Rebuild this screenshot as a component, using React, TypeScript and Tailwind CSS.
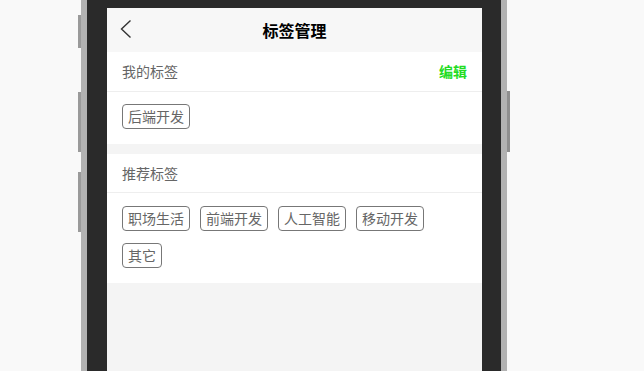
import React from "react";

const font = { fontFamily: '"Noto Sans CJK SC", "Noto Sans", sans-serif' };

function Tag({ label }: { label: string }) {
  return (
    <span className="inline-block h-[25px] px-[5px] border border-[#777] rounded-[4px] text-[14px] leading-[23px] text-[#666]">
      {label}
    </span>
  );
}

export default function App() {
  const recommended = ["职场生活", "前端开发", "人工智能", "移动开发", "其它"];
  return (
    <div className="w-[644px] h-[371px] overflow-hidden bg-[#f9f9f9] flex pl-[81px]" style={font}>
      <div className="relative h-[371px] w-[426px] border-x-[6px] border-[#b2b2b2] bg-[#2a2a2a] pt-[8px] pl-[20px] pr-[19px] shrink-0">
        <div className="absolute left-[-9px] top-[15px] w-[3px] h-[33px] bg-[#9a9a9a]" />
        <div className="absolute left-[-9px] top-[92px] w-[3px] h-[60px] bg-[#9a9a9a]" />
        <div className="absolute left-[-9px] top-[172px] w-[3px] h-[60px] bg-[#9a9a9a]" />
        <div className="absolute right-[-9px] top-[91px] w-[3px] h-[61px] bg-[#8f8f8f]" />
        <div className="w-[375px] h-full bg-[#f4f4f4] flex flex-col">
          <div className="h-[44px] bg-[#f7f7f7] flex items-center relative">
            <svg className="absolute left-[13px] top-[11px]" width="12" height="20" viewBox="0 0 12 20">
              <polyline points="10.5,1.5 1.5,10 10.5,18.5" fill="none" stroke="#333" strokeWidth="1.4" />
            </svg>
            <div className="flex-1 text-center text-[16px] font-bold text-black leading-[22px]">标签管理</div>
          </div>
          <div className="bg-white">
            <div className="h-[40px] border-b border-[#eeeeee] flex items-center justify-between px-[15px]">
              <span className="text-[14px] text-[#666]">我的标签</span>
              <span className="text-[14px] font-bold text-[#22dc22]">编辑</span>
            </div>
            <div className="px-[15px] pt-[12px] pb-[15px] flex flex-wrap gap-x-[10px] gap-y-[12px]">
              <Tag label="后端开发" />
            </div>
          </div>
          <div className="h-[10px]" />
          <div className="bg-white">
            <div className="h-[39px] border-b border-[#eeeeee] flex items-center px-[15px]">
              <span className="text-[14px] text-[#666]">推荐标签</span>
            </div>
            <div className="px-[15px] pt-[13px] pb-[15px] flex flex-wrap gap-x-[10px] gap-y-[12px]">
              {recommended.map((t) => (
                <Tag key={t} label={t} />
              ))}
            </div>
          </div>
        </div>
      </div>
    </div>
  );
}
